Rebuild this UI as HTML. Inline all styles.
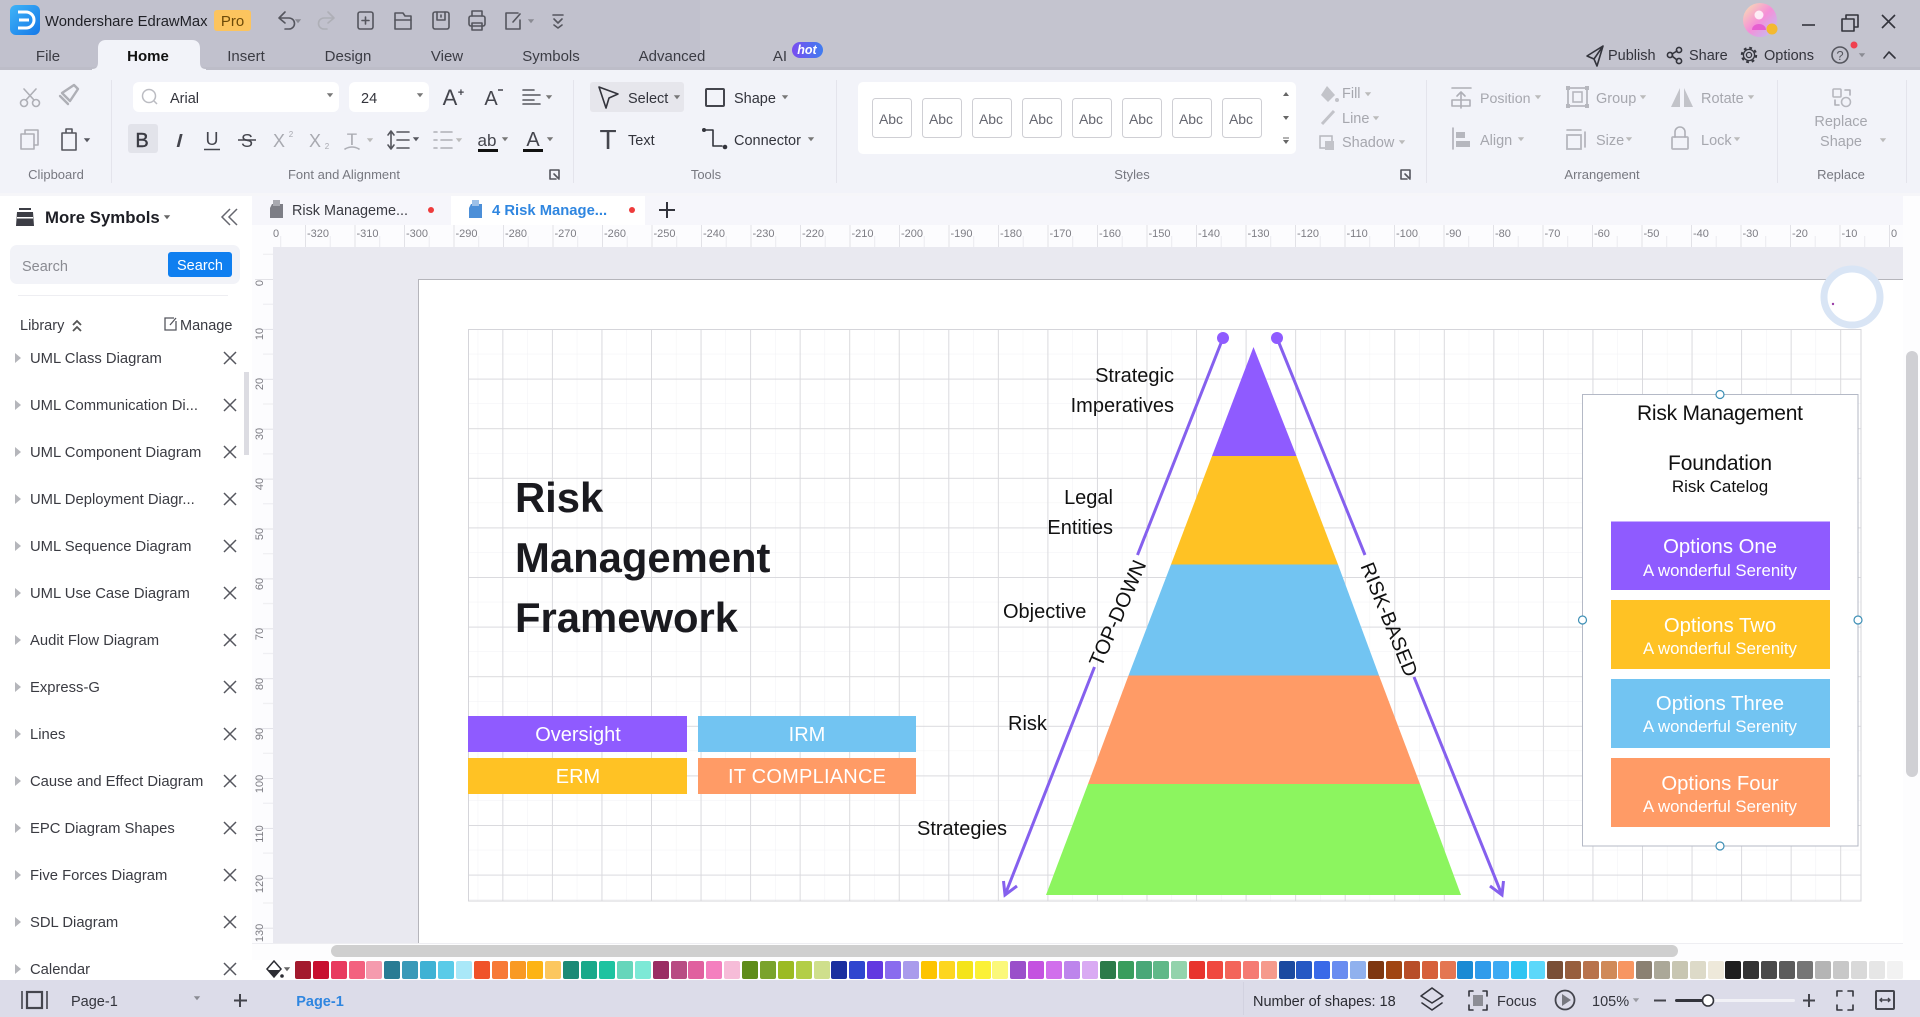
<!DOCTYPE html>
<html lang="en"><head><meta charset="utf-8"><title>Wondershare EdrawMax</title>
<style>
html,body{margin:0;padding:0;background:#fff;width:1920px;height:1017px;overflow:hidden}
svg{display:block}
text{font-family:"Liberation Sans",Arial,sans-serif}
.u{font-size:14.5px;fill:#33343c}
.g{font-size:14.5px;fill:#a6a7ae}
.l{font-size:13px;fill:#777880;text-anchor:middle}
.it{font-size:14.8px;fill:#3a3b42}
.r{font-size:11px;fill:#7d7d84}
.d{font-size:20px;fill:#111}
.w{fill:#fff;text-anchor:middle}
.s{fill:none;stroke:#55565e;stroke-width:1.6;stroke-linecap:round;stroke-linejoin:round}
.sd{fill:none;stroke:#aeafb6;stroke-width:1.6;stroke-linecap:round;stroke-linejoin:round}
.k{fill:none;stroke:#33343c;stroke-width:1.6;stroke-linecap:round;stroke-linejoin:round}
</style></head><body>
<svg width="1920" height="1017" viewBox="0 0 1920 1017" xmlns="http://www.w3.org/2000/svg">
<defs>
<path id="c" d="M-3.2-1.8h6.4L0 2.2z"/>
<path id="x" d="M-6-6L6 6M6-6L-6 6" fill="none" stroke="#55565e" stroke-width="1.5"/>
<path id="t" d="M-3-5L3 0L-3 5z" fill="#b5b6bb"/>
<linearGradient id="lg" x1="0" y1="0" x2="1" y2="1"><stop offset="0" stop-color="#3fb4f7"/><stop offset="1" stop-color="#1478e8"/></linearGradient>
<linearGradient id="hot" x1="0" y1="0" x2="1" y2="0"><stop offset="0" stop-color="#7a4df0"/><stop offset="1" stop-color="#3f7df0"/></linearGradient>
<linearGradient id="av" x1="0" y1="0" x2="1" y2="1"><stop offset="0" stop-color="#f8e6b0"/><stop offset=".5" stop-color="#f58fd8"/><stop offset="1" stop-color="#b8c6f6"/></linearGradient>
<pattern id="minor" x="477.7" y="304.2" width="49.55" height="49.6" patternUnits="userSpaceOnUse"><path d="M0 0V49.6M0 0H49.55" stroke="#f1f1f4" stroke-width="1" fill="none"/></pattern>
<pattern id="major" x="452.8" y="329" width="49.55" height="49.6" patternUnits="userSpaceOnUse"><path d="M.5 0V49.6M0 .5H49.55" stroke="#dadade" stroke-width="1" fill="none"/></pattern>
<pattern id="hr" x="305" y="225" width="49.5" height="22" patternUnits="userSpaceOnUse"><path d="M.5 0V22" stroke="#e2e2e7"/><path d="M25.2 11V22" stroke="#ebebef"/></pattern>
<pattern id="vr" x="252" y="279" width="21" height="49.9" patternUnits="userSpaceOnUse"><path d="M3 .5H21" stroke="#e2e2e7"/><path d="M11 25.2H21" stroke="#ebebef"/></pattern>
</defs>

<!-- backgrounds -->
<rect width="1920" height="1017" fill="#fff"/>
<rect width="1920" height="70" fill="#c4c4cf"/>
<rect width="700" height="70" fill="#bfbfcc" opacity=".6"/>
<rect y="67" width="1920" height="3" fill="#bdbdc8"/>
<rect y="70" width="1920" height="123" fill="#f2f3f9"/>
<rect y="193" width="1920" height="3" fill="#f6f6f9"/>
<path d="M92 69C97 69 98 66 98 62V48C98 43 101 40 106 40H192C197 40 200 43 200 48V62C200 66 201 69 206 69V72H92z" fill="#f2f3f9"/>

<!-- title bar -->
<rect x="10" y="5" width="30" height="30" rx="6" fill="url(#lg)"/>
<path d="M18 12H26A8 8 0 0 1 26 28H18M19 20H29" fill="none" stroke="#fff" stroke-width="3"/>
<text x="45" y="26" font-size="14.800" fill="#1f2026">Wondershare EdrawMax</text>
<rect x="214" y="10" width="37" height="21" rx="3" fill="#fcc45e"/>
<text x="232.500" y="26" font-size="15" fill="#6d4a08" text-anchor="middle">Pro</text>
<path class="s" d="M287 14L281 20L287 25M281 20H291A5.500 5.500 0 0 1 291 31H287" transform="translate(-2 -2)"/>
<use href="#c" x="298" y="21" fill="#8a8b93"/>
<path class="sd" d="M334 14L340 20L334 25M340 20H330A5.500 5.500 0 0 0 330 31H333" transform="translate(-6 -2)"/>
<rect class="s" x="358" y="12" width="15" height="17" rx="2"/><path class="s" d="M365.500 17V24M362 20.500H369"/>
<path class="s" d="M395 16V29H411V16H405L403 13H395z"/><path class="s" d="M395 20H411"/>
<rect class="s" x="433" y="12" width="16" height="17" rx="2"/><path class="s" d="M437 12V20H445V12M441 15V17"/>
<rect class="s" x="469" y="16" width="16" height="10" rx="2"/><path class="s" d="M472 16V11H482V16M472 23H482V30H472z"/>
<path class="s" d="M506 13H518M506 13V29H520V20M513 22L520 14"/>
<use href="#c" x="531" y="21" fill="#8a8b93"/>
<path class="s" d="M553 15H563M554 19L558 23L562 19M554 25L558 28L562 25"/>

<!-- tab labels -->
<g font-size="15" fill="#3b3c44" text-anchor="middle">
<text x="48" y="61">File</text>
<text x="148" y="61" font-weight="bold" fill="#111">Home</text>
<text x="246" y="61">Insert</text>
<text x="348" y="61">Design</text>
<text x="447" y="61">View</text>
<text x="551" y="61">Symbols</text>
<text x="672" y="61">Advanced</text>
<text x="780" y="61">AI</text>
</g>
<rect x="792" y="42" width="31" height="16" rx="8" fill="url(#hot)"/>
<text x="807" y="54" font-size="12.500" font-style="italic" font-weight="bold" fill="#fff" text-anchor="middle">hot</text>

<!-- top right -->
<circle cx="1760" cy="20" r="17" fill="url(#av)"/>
<circle cx="1759" cy="15" r="4.500" fill="#fff" opacity=".8"/><path d="M1752 30C1752 22 1766 22 1766 30z" fill="#e65fd0"/>
<circle cx="1772" cy="29" r="5.500" fill="#f4b92f"/>
<path d="M1802 25H1815" stroke="#33343c" stroke-width="1.6"/>
<path class="k" d="M1842 19H1854V31H1842zM1846 19V15H1858V27H1854" stroke-width="1.400"/>
<path d="M1882 15L1895 28M1895 15L1882 28" stroke="#33343c" stroke-width="1.6" fill="none"/>
<path class="k" d="M1603 46L1587 56L1594 59L1597 66L1603 46L1594 59" stroke-width="1.400"/>
<text x="1608" y="60" class="u" fill="#33343c">Publish</text>
<circle class="k" cx="1670" cy="55" r="2.600"/><circle class="k" cx="1679" cy="50" r="2.600"/><circle class="k" cx="1679" cy="61" r="2.600"/><path class="k" d="M1672 54L1677 51M1672 56L1677 60" stroke-width="1.200"/>
<text x="1689" y="60" class="u">Share</text>
<circle cx="1749" cy="55" r="2.600" fill="none" stroke="#33343c" stroke-width="1.300"/><circle cx="1749" cy="55" r="5.600" fill="none" stroke="#33343c" stroke-width="1.300"/><circle cx="1749" cy="55" r="7.200" fill="none" stroke="#33343c" stroke-width="2" stroke-dasharray="2.800 2.860"/>
<text x="1764" y="60" class="u">Options</text>
<circle class="s" cx="1840" cy="55" r="8"/><text x="1840" y="60" font-size="13" fill="#55565e" text-anchor="middle">?</text>
<circle cx="1854" cy="45" r="3.500" fill="#f0414f"/>
<use href="#c" x="1862" y="55" fill="#8a8b93"/>
<path class="k" d="M1884 58L1889 52L1895 58"/>

<!-- ribbon dividers -->
<g stroke="#e4e4ec"><path d="M111.500 80V183M573.500 80V183M836.500 80V183M1426.500 80V183M1777.500 80V183M1906.500 80V183"/></g>

<!-- clipboard -->
<g class="sd">
<circle cx="24" cy="103" r="3.500"/><circle cx="36" cy="103" r="3.500"/><path d="M26 100L36 89M34 100L24 89"/>
<path d="M62 93L70 101L78 89L74 85zM60 96L68 104" stroke-width="2.400"/>
<rect x="21" y="134" width="13" height="15"/><path d="M25 134V130H38V145H34"/>
</g>
<path class="s" d="M62 133H76V150H62zM66 133V129H72V133" stroke-width="2"/>
<use href="#c" x="87" y="140" fill="#55565e"/>
<text x="56" y="179" class="l">Clipboard</text>

<!-- font -->
<rect x="133" y="82" width="206" height="30" rx="6" fill="#fff"/>
<circle cx="149" cy="96" r="6.500" fill="none" stroke="#bbbcc2" stroke-width="1.500"/><path d="M154 101L157 104" stroke="#bbbcc2" stroke-width="1.500"/>
<text x="170" y="103" font-size="14.500" fill="#33343c">Arial</text>
<use href="#c" x="330" y="95" fill="#777"/>
<rect x="349" y="82" width="80" height="30" rx="6" fill="#fff"/>
<text x="361" y="103" font-size="14.500" fill="#33343c">24</text>
<use href="#c" x="420" y="95" fill="#777"/>
<text x="450" y="105" font-size="22" fill="#44454d" text-anchor="middle">A</text><text x="461" y="96" font-size="11" font-weight="bold" fill="#44454d" text-anchor="middle">+</text>
<text x="491" y="105" font-size="20" fill="#44454d" text-anchor="middle">A</text><path d="M498 90H503" stroke="#44454d" stroke-width="1.500"/>
<path class="s" d="M523 90H534M523 95H540M523 100H534M523 104H540" stroke-width="1.700"/>
<use href="#c" x="549" y="97" fill="#777"/>
<rect x="128" y="124" width="30" height="29" rx="3" fill="#e2e3ea"/>
<text x="142" y="147" font-size="20" fill="#3a3b43" stroke="#3a3b43" stroke-width=".4" text-anchor="middle">B</text>
<text transform="translate(178 147) skewX(-14)" font-size="19" font-weight="bold" fill="#44454d" text-anchor="middle">I</text>
<text x="212" y="145" font-size="18" fill="#44454d" text-anchor="middle">U</text><path d="M204 149.500H220" stroke="#44454d" stroke-width="1.500"/>
<text x="247" y="147" font-size="18" fill="#44454d" text-anchor="middle">S</text><path d="M238 140H256" stroke="#44454d" stroke-width="1.500"/>
<text x="279" y="147" font-size="18" fill="#a8a9b0" text-anchor="middle">X</text><text x="291" y="137" font-size="8" fill="#a8a9b0" text-anchor="middle">2</text>
<text x="315" y="147" font-size="18" fill="#a8a9b0" text-anchor="middle">X</text><text x="327" y="149" font-size="8" fill="#a8a9b0" text-anchor="middle">2</text>
<text x="352" y="145" font-size="17" font-family="Liberation Serif" fill="#a8a9b0" text-anchor="middle">T</text><path class="sd" d="M345 149Q352 145 359 149"/>
<use href="#c" x="370" y="140" fill="#bbb"/>
<path class="s" d="M391 132V148M388 135L391 131L394 135M388 145L391 149L394 145M397 132H409M397 140H409M397 148H409" stroke-width="1.800"/>
<use href="#c" x="416" y="139" fill="#55565e"/>
<path class="sd" d="M434 132H437M441 132H452M434 140H437M441 140H452M434 148H437M441 148H452" stroke-width="1.800"/>
<use href="#c" x="459" y="140" fill="#bbb"/>
<text x="487" y="146" font-size="17" fill="#44454d" text-anchor="middle">ab</text><rect x="478" y="149" width="20" height="3" fill="#111"/>
<use href="#c" x="505" y="139" fill="#777"/>
<text x="533" y="146" font-size="20" fill="#44454d" text-anchor="middle">A</text><rect x="523" y="149" width="20" height="3" fill="#111"/>
<use href="#c" x="550" y="139" fill="#777"/>
<text x="344" y="179" class="l">Font and Alignment</text>
<path class="s" d="M550 170H559V178M550 170V179H556M554 174L559 179" stroke-width="1.300"/>

<!-- tools -->
<rect x="590" y="82" width="94" height="30" rx="3" fill="#e6e6ec"/>
<path class="k" d="M599 87L618 94L609 98L606 108z" stroke-width="1.800"/>
<text x="628" y="103" class="u">Select</text><use href="#c" x="677" y="97" fill="#777"/>
<rect x="706" y="89" width="18" height="17" rx="1" fill="none" stroke="#44454d" stroke-width="2"/>
<text x="734" y="103" class="u">Shape</text><use href="#c" x="785" y="97" fill="#777"/>
<text x="608" y="149" font-size="28" font-family="Liberation Serif" fill="#44454d" text-anchor="middle">T</text>
<text x="628" y="145" class="u">Text</text>
<circle cx="704" cy="130" r="2" fill="#33343c"/><circle cx="725" cy="147" r="2.300" fill="#33343c"/>
<path class="k" d="M706 130H713V146H722"/>
<text x="734" y="145" class="u">Connector</text><use href="#c" x="811" y="139" fill="#777"/>
<text x="706" y="179" class="l">Tools</text>

<!-- styles -->
<rect x="858" y="82" width="438" height="72" rx="5" fill="#fff"/>
<g fill="#fff" stroke="#cfcfd4"><rect x="872.500" y="98.500" width="39" height="39" rx="3"/><rect x="922.500" y="98.500" width="39" height="39" rx="3"/><rect x="972.500" y="98.500" width="39" height="39" rx="3"/><rect x="1022.500" y="98.500" width="39" height="39" rx="3"/><rect x="1072.500" y="98.500" width="39" height="39" rx="3"/><rect x="1122.500" y="98.500" width="39" height="39" rx="3"/><rect x="1172.500" y="98.500" width="39" height="39" rx="3"/><rect x="1222.500" y="98.500" width="39" height="39" rx="3"/></g>
<g font-size="14" fill="#666770" text-anchor="middle"><text x="891" y="124">Abc</text><text x="941" y="124">Abc</text><text x="991" y="124">Abc</text><text x="1041" y="124">Abc</text><text x="1091" y="124">Abc</text><text x="1141" y="124">Abc</text><text x="1191" y="124">Abc</text><text x="1241" y="124">Abc</text></g>
<path d="M1286 92L1283 96H1289z M1283 116H1289L1286 120z M1283 140H1289L1286 144z" fill="#666"/><path d="M1283 138H1289" stroke="#666"/>
<text x="1132" y="179" class="l">Styles</text>
<path class="s" d="M1401 170H1410V178M1401 170V179H1407M1405 174L1410 179" stroke-width="1.300"/>

<!-- fill/line/shadow -->
<path d="M1327 86L1335 95L1328 102L1321 95z" fill="#c2c3c9"/><circle cx="1337" cy="100" r="2" fill="#c2c3c9"/>
<path d="M1322 124L1334 111" stroke="#c2c3c9" stroke-width="3"/>
<rect x="1320" y="136" width="12" height="12" fill="none" stroke="#b6b7be" stroke-width="1.500"/><rect x="1325" y="141" width="9" height="9" fill="#c2c3c9"/>
<g class="g"><text x="1342" y="98">Fill</text><text x="1342" y="123">Line</text><text x="1342" y="147">Shadow</text></g>
<use href="#c" x="1368" y="94" fill="#bbb"/><use href="#c" x="1376" y="118" fill="#bbb"/><use href="#c" x="1402" y="142" fill="#bbb"/>

<!-- arrangement -->
<path class="sd" d="M1452 88H1471M1461 108V93M1457 96L1461 92L1465 96M1452 100V106H1470V100z" stroke-width="1.800"/>
<g class="g"><text x="1480" y="103" font-size="14.200" style="font-size:14.200px">Position</text><text x="1596" y="103">Group</text><text x="1701" y="103">Rotate</text><text x="1480" y="145">Align</text><text x="1596" y="145">Size</text><text x="1701" y="145">Lock</text></g>
<use href="#c" x="1538" y="97" fill="#bbb"/><use href="#c" x="1643" y="97" fill="#bbb"/><use href="#c" x="1751" y="97" fill="#bbb"/><use href="#c" x="1521" y="139" fill="#bbb"/><use href="#c" x="1629" y="139" fill="#bbb"/><use href="#c" x="1737" y="139" fill="#bbb"/>
<rect x="1568" y="88" width="19" height="18" rx="1" fill="none" stroke="#b6b7be" stroke-width="1.800"/><rect x="1573" y="92" width="9" height="10" fill="none" stroke="#b6b7be" stroke-width="1.600"/>
<g fill="#b6b7be"><rect x="1566" y="86" width="4" height="4"/><rect x="1585" y="86" width="4" height="4"/><rect x="1566" y="104" width="4" height="4"/><rect x="1585" y="104" width="4" height="4"/></g>
<path d="M1680 88V107H1671zM1684 88V107H1693z" fill="#c2c3c9"/>
<path class="sd" d="M1453 128V149" stroke-width="2"/><rect x="1456" y="132" width="9" height="6" fill="#b6b7be"/><rect x="1456" y="141" width="14" height="6" fill="#b6b7be"/>
<rect x="1567" y="135" width="14" height="14" fill="none" stroke="#b6b7be" stroke-width="1.800"/><path class="sd" d="M1567 130H1581M1585 132V147"/>
<rect x="1672" y="137" width="16" height="12" rx="1" fill="none" stroke="#b6b7be" stroke-width="1.800"/><path class="sd" d="M1675 137V132A5 5 0 0 1 1685 132V137" stroke-width="1.800"/>
<text x="1602" y="179" class="l">Arrangement</text>

<!-- replace -->
<rect x="1833" y="89" width="8" height="8" rx="1" fill="none" stroke="#b6b7be" stroke-width="1.600"/><circle cx="1846" cy="102" r="4.500" fill="none" stroke="#b6b7be" stroke-width="1.600"/><path class="sd" d="M1845 90H1850V95M1835 100V105H1839" stroke-width="1.400"/>
<g class="g" text-anchor="middle"><text x="1841" y="126">Replace</text><text x="1841" y="146">Shape</text></g>
<use href="#c" x="1883" y="140" fill="#bbb"/>
<text x="1841" y="179" class="l">Replace</text>

<!-- left panel -->
<rect x="0" y="196" width="252" height="784" fill="#fff"/>
<path d="M17 212H33L34 226H16z" fill="#3c3d45"/><rect x="19" y="208" width="12" height="2" fill="#3c3d45"/><rect x="17" y="217" width="16" height="1.500" fill="#fff"/>
<text x="45" y="223" font-size="16.800" font-weight="bold" fill="#1d1e25">More Symbols</text>
<use href="#c" x="167" y="217" fill="#666"/>
<path d="M230 209L222 217L230 225M237 209L229 217L237 225" fill="none" stroke="#66676f" stroke-width="1.500"/>
<rect x="10" y="245" width="230" height="39" rx="7" fill="#f2f3f8"/>
<text x="22" y="271" font-size="14.500" fill="#8a8b92">Search</text>
<rect x="168" y="252" width="64" height="25" rx="3" fill="#0f7ff0"/>
<text x="200" y="270" font-size="14.500" fill="#fff" text-anchor="middle">Search</text>
<path d="M18 295.500H228" stroke="#eeeef2"/>
<text x="20" y="330" font-size="14.500" fill="#3a3b42">Library</text>
<path d="M73 325L77 321L81 325M73 331L77 327L81 331" fill="none" stroke="#555" stroke-width="1.800"/>
<path d="M174 318H165V330H176V321M170 325L176 318" fill="none" stroke="#55565e" stroke-width="1.300"/>
<text x="180" y="330" font-size="14.500" fill="#3a3b42">Manage</text>
<g class="it">
<text x="30" y="363">UML Class Diagram</text><text x="30" y="410">UML Communication Di...</text><text x="30" y="457">UML Component Diagram</text><text x="30" y="504">UML Deployment Diagr...</text><text x="30" y="551">UML Sequence Diagram</text><text x="30" y="598">UML Use Case Diagram</text><text x="30" y="645">Audit Flow Diagram</text><text x="30" y="692">Express-G</text><text x="30" y="739">Lines</text><text x="30" y="786">Cause and Effect Diagram</text><text x="30" y="833">EPC Diagram Shapes</text><text x="30" y="880">Five Forces Diagram</text><text x="30" y="927">SDL Diagram</text><text x="30" y="974">Calendar</text>
</g>
<use href="#t" x="18" y="358"/><use href="#t" x="18" y="405"/><use href="#t" x="18" y="452"/><use href="#t" x="18" y="499"/><use href="#t" x="18" y="546"/><use href="#t" x="18" y="593"/><use href="#t" x="18" y="640"/><use href="#t" x="18" y="687"/><use href="#t" x="18" y="734"/><use href="#t" x="18" y="781"/><use href="#t" x="18" y="828"/><use href="#t" x="18" y="875"/><use href="#t" x="18" y="922"/><use href="#t" x="18" y="969"/>
<use href="#x" x="230" y="358"/><use href="#x" x="230" y="405"/><use href="#x" x="230" y="452"/><use href="#x" x="230" y="499"/><use href="#x" x="230" y="546"/><use href="#x" x="230" y="593"/><use href="#x" x="230" y="640"/><use href="#x" x="230" y="687"/><use href="#x" x="230" y="734"/><use href="#x" x="230" y="781"/><use href="#x" x="230" y="828"/><use href="#x" x="230" y="875"/><use href="#x" x="230" y="922"/><use href="#x" x="230" y="969"/>
<rect x="244" y="372" width="5" height="83" fill="#dcdce2"/>

<!-- doc tabs -->
<rect x="252" y="196" width="1668" height="29" fill="#f6f6fb"/>
<rect x="451" y="196" width="194" height="29" fill="#fff"/>
<path d="M272 204H283V218H270V208z" fill="#7d7e86"/><rect x="273" y="200" width="7" height="6" fill="#a8a9b0"/>
<text x="292" y="215" font-size="14.400" fill="#3a3b42">Risk Manageme...</text>
<circle cx="431" cy="210" r="3" fill="#ee3b3b"/>
<path d="M471 204H482V218H469V208z" fill="#4c8fd8"/><rect x="472" y="200" width="7" height="6" fill="#9cc0e8"/>
<text x="492" y="215" font-size="14.800" font-weight="bold" fill="#2f86e0">4 Risk Manage...</text>
<circle cx="632" cy="210" r="3" fill="#ee3b3b"/>
<path d="M667 202V218M659 210H675" stroke="#33343c" stroke-width="2"/>

<!-- rulers -->
<rect x="252" y="225" width="1668" height="22" fill="#fcfcfe"/>
<rect x="252" y="247" width="21" height="696" fill="#fcfcfe"/>
<rect x="273" y="225" width="1630" height="22" fill="url(#hr)"/>
<rect x="252" y="247" width="21" height="696" fill="url(#vr)"/>
<g class="r">
<text x="273" y="237">0</text><text x="307" y="237">-320</text><text x="356.500" y="237">-310</text><text x="406" y="237">-300</text><text x="455.500" y="237">-290</text><text x="505" y="237">-280</text><text x="554.500" y="237">-270</text><text x="604" y="237">-260</text><text x="653.500" y="237">-250</text><text x="703" y="237">-240</text><text x="752.500" y="237">-230</text><text x="802" y="237">-220</text><text x="851.500" y="237">-210</text><text x="901" y="237">-200</text><text x="950.500" y="237">-190</text><text x="1000" y="237">-180</text><text x="1049.500" y="237">-170</text><text x="1099" y="237">-160</text><text x="1148.500" y="237">-150</text><text x="1198" y="237">-140</text><text x="1247.500" y="237">-130</text><text x="1297" y="237">-120</text><text x="1346.500" y="237">-110</text><text x="1396" y="237">-100</text><text x="1445.500" y="237">-90</text><text x="1495" y="237">-80</text><text x="1544.500" y="237">-70</text><text x="1594" y="237">-60</text><text x="1643.500" y="237">-50</text><text x="1693" y="237">-40</text><text x="1742.500" y="237">-30</text><text x="1792" y="237">-20</text><text x="1841.500" y="237">-10</text><text x="1891" y="237">0</text>
</g>
<g class="r" text-anchor="middle">
<text transform="translate(263 283) rotate(-90)">0</text><text transform="translate(263 334) rotate(-90)">10</text><text transform="translate(263 384) rotate(-90)">20</text><text transform="translate(263 434) rotate(-90)">30</text><text transform="translate(263 484) rotate(-90)">40</text><text transform="translate(263 534) rotate(-90)">50</text><text transform="translate(263 584) rotate(-90)">60</text><text transform="translate(263 634) rotate(-90)">70</text><text transform="translate(263 684) rotate(-90)">80</text><text transform="translate(263 734) rotate(-90)">90</text><text transform="translate(263 784) rotate(-90)">100</text><text transform="translate(263 834) rotate(-90)">110</text><text transform="translate(263 884) rotate(-90)">120</text><text transform="translate(263 933) rotate(-90)">130</text>
</g>

<!-- canvas -->
<rect x="273" y="247" width="1630" height="696" fill="#e9e9f0"/>
<rect x="418" y="279" width="1485" height="664" fill="#fff"/>
<path d="M418.500 943V279.500H1903" fill="none" stroke="#b5b5bb"/>
<rect x="468" y="329" width="1393" height="572" fill="url(#minor)"/>
<rect x="468" y="329" width="1393" height="572" fill="url(#major)"/>
<rect x="468.500" y="329.500" width="1392.500" height="571.500" fill="none" stroke="#d5d5da"/>

<!-- title -->
<g font-size="41.800" font-weight="bold" fill="#1a1a1f"><text x="515" y="512">Risk</text><text x="515" y="572">Management</text><text x="515" y="632">Framework</text></g>

<!-- boxes -->
<rect x="468" y="716" width="219" height="36" fill="#8f5bff"/>
<rect x="698" y="716" width="218" height="36" fill="#72c4f2"/>
<rect x="468" y="758" width="219" height="36" fill="#ffc224"/>
<rect x="698" y="758" width="218" height="36" fill="#ff9b66"/>
<g class="w" font-size="20"><text x="578" y="741">Oversight</text><text x="807" y="741">IRM</text><text x="578" y="783">ERM</text><text x="807" y="783" textLength="158">IT COMPLIANCE</text></g>

<!-- pyramid -->
<path d="M1253.500 347L1296.500 456H1212z" fill="#8f5bff"/>
<path d="M1212 456H1296.500L1338 564.500H1171z" fill="#ffc224"/>
<path d="M1171 564.500H1338L1379 675.500H1128.500z" fill="#72c4f2"/>
<path d="M1128.500 675.500H1379L1420 784H1088z" fill="#ff9b66"/>
<path d="M1088 784H1420L1461 895H1046z" fill="#8cf55f"/>

<!-- arrows -->
<g fill="none" stroke="#8560ee" stroke-width="3">
<path d="M1223 338L1137.500 555M1094.500 667L1005 895M1003.500 881L1005 895L1017 886"/>
<path d="M1277 338L1365 555M1414 677L1502 895M1490 886L1502 895L1503.500 881"/>
</g>
<circle cx="1223" cy="338" r="6" fill="#8f5bff"/><circle cx="1277" cy="338" r="6" fill="#8f5bff"/>
<text transform="translate(1124 616) rotate(-66.500)" font-size="20.500" fill="#111" text-anchor="middle">TOP-DOWN</text>
<text transform="translate(1383 622) rotate(68)" font-size="20" fill="#111" text-anchor="middle">RISK-BASED</text>

<!-- labels -->
<g class="d"><text x="1174" y="382" text-anchor="end">Strategic</text><text x="1174" y="412" text-anchor="end">Imperatives</text><text x="1113" y="504" text-anchor="end">Legal</text><text x="1113" y="534" text-anchor="end">Entities</text><text x="1003" y="618">Objective</text><text x="1008" y="730">Risk</text><text x="917" y="835">Strategies</text></g>

<!-- right panel -->
<rect x="1582.500" y="394.500" width="275.500" height="451.500" fill="#fff" stroke="#b4b9c6"/>
<text x="1720" y="420" font-size="21" fill="#111" text-anchor="middle" textLength="166">Risk Management</text>
<text x="1720" y="470" font-size="21" fill="#111" text-anchor="middle" textLength="104">Foundation</text>
<text x="1720" y="492" font-size="17" fill="#111" text-anchor="middle">Risk Catelog</text>
<rect x="1611" y="521.500" width="219" height="68.500" fill="#8f5bff"/>
<rect x="1611" y="600" width="219" height="69" fill="#ffc224"/>
<rect x="1611" y="679" width="219" height="69" fill="#72c4f2"/>
<rect x="1611" y="758" width="219" height="69" fill="#ff9b66"/>
<g class="w" font-size="20.300"><text x="1720" y="553">Options One</text><text x="1720" y="632">Options Two</text><text x="1720" y="710">Options Three</text><text x="1720" y="790">Options Four</text></g>
<g class="w" font-size="16.800"><text x="1720" y="576">A wonderful Serenity</text><text x="1720" y="654">A wonderful Serenity</text><text x="1720" y="732">A wonderful Serenity</text><text x="1720" y="812">A wonderful Serenity</text></g>
<g fill="#fff" stroke="#3d8fb5" stroke-width="1.200"><circle cx="1720" cy="394.500" r="4"/><circle cx="1582.500" cy="620" r="4"/><circle cx="1858" cy="620" r="4"/><circle cx="1720" cy="846" r="4"/></g>

<!-- ring -->
<circle cx="1852" cy="297" r="28" fill="#fff" stroke="#d9e5f5" stroke-width="7"/>
<circle cx="1833" cy="304" r="1.200" fill="#9a3fa8"/>

<!-- scrollbars -->
<rect x="1903" y="196" width="17" height="784" fill="#fdfdfe"/>
<rect x="1906" y="351" width="12" height="426" rx="6" fill="#d0d0d4"/>
<rect x="252" y="943" width="1651" height="18" fill="#fdfdfe"/>
<path d="M252 943.500H1903" stroke="#eeeef2"/>
<rect x="331" y="945" width="1347" height="12" rx="6" fill="#cfcfcf"/>

<!-- palette -->
<rect x="252" y="960" width="1668" height="20" fill="#fff"/>
<path d="M274 961L281 969L274 977L267 969z" fill="none" stroke="#2c2d33" stroke-width="1.500"/><path d="M268 970H280L274 976.500z" fill="#2c2d33"/><circle cx="282" cy="976" r="1.800" fill="#2c2d33"/>
<use href="#c" x="287" y="969" fill="#666"/>
<g>
<rect x="295" y="961" width="16" height="18" rx="2" fill="#a31a2e"/><rect x="313" y="961" width="16" height="18" rx="2" fill="#c8102f"/><rect x="331" y="961" width="16" height="18" rx="2" fill="#e83a5e"/><rect x="349" y="961" width="16" height="18" rx="2" fill="#f3617f"/><rect x="366" y="961" width="16" height="18" rx="2" fill="#f59bae"/>
<rect x="384" y="961" width="16" height="18" rx="2" fill="#2a7c94"/><rect x="402" y="961" width="16" height="18" rx="2" fill="#3a9ab8"/><rect x="420" y="961" width="16" height="18" rx="2" fill="#3fb2d4"/><rect x="438" y="961" width="16" height="18" rx="2" fill="#5acbe8"/><rect x="456" y="961" width="16" height="18" rx="2" fill="#a9e8f8"/>
<rect x="474" y="961" width="16" height="18" rx="2" fill="#f0532a"/><rect x="492" y="961" width="16" height="18" rx="2" fill="#f77a37"/><rect x="510" y="961" width="16" height="18" rx="2" fill="#f99a24"/><rect x="527" y="961" width="16" height="18" rx="2" fill="#fdb415"/><rect x="545" y="961" width="16" height="18" rx="2" fill="#fcc75f"/>
<rect x="563" y="961" width="16" height="18" rx="2" fill="#1b8a76"/><rect x="581" y="961" width="16" height="18" rx="2" fill="#1aa98a"/><rect x="599" y="961" width="16" height="18" rx="2" fill="#1dc3a0"/><rect x="617" y="961" width="16" height="18" rx="2" fill="#66d6bb"/><rect x="635" y="961" width="16" height="18" rx="2" fill="#7de9d6"/>
<rect x="653" y="961" width="16" height="18" rx="2" fill="#9a2d63"/><rect x="671" y="961" width="16" height="18" rx="2" fill="#b84c83"/><rect x="688" y="961" width="16" height="18" rx="2" fill="#e0609f"/><rect x="706" y="961" width="16" height="18" rx="2" fill="#f47fbf"/><rect x="724" y="961" width="16" height="18" rx="2" fill="#f6bcd8"/>
<rect x="742" y="961" width="16" height="18" rx="2" fill="#5f8d1a"/><rect x="760" y="961" width="16" height="18" rx="2" fill="#7aa32b"/><rect x="778" y="961" width="16" height="18" rx="2" fill="#9cbb22"/><rect x="796" y="961" width="16" height="18" rx="2" fill="#b3ce47"/><rect x="814" y="961" width="16" height="18" rx="2" fill="#cfdf8c"/>
<rect x="831" y="961" width="16" height="18" rx="2" fill="#1b2fa0"/><rect x="849" y="961" width="16" height="18" rx="2" fill="#2f45cf"/><rect x="867" y="961" width="16" height="18" rx="2" fill="#6238e0"/><rect x="885" y="961" width="16" height="18" rx="2" fill="#8a6cee"/><rect x="903" y="961" width="16" height="18" rx="2" fill="#a99bec"/>
<rect x="921" y="961" width="16" height="18" rx="2" fill="#fdc400"/><rect x="939" y="961" width="16" height="18" rx="2" fill="#fdd61f"/><rect x="957" y="961" width="16" height="18" rx="2" fill="#f4e41a"/><rect x="975" y="961" width="16" height="18" rx="2" fill="#fbf136"/><rect x="992" y="961" width="16" height="18" rx="2" fill="#fbf87a"/>
<rect x="1010" y="961" width="16" height="18" rx="2" fill="#9a4fca"/><rect x="1028" y="961" width="16" height="18" rx="2" fill="#c452e0"/><rect x="1046" y="961" width="16" height="18" rx="2" fill="#d16fec"/><rect x="1064" y="961" width="16" height="18" rx="2" fill="#bd85ec"/><rect x="1082" y="961" width="16" height="18" rx="2" fill="#d9a9f3"/>
<rect x="1100" y="961" width="16" height="18" rx="2" fill="#2b7b49"/><rect x="1118" y="961" width="16" height="18" rx="2" fill="#3a9d5d"/><rect x="1136" y="961" width="16" height="18" rx="2" fill="#4aa878"/><rect x="1153" y="961" width="16" height="18" rx="2" fill="#60b888"/><rect x="1171" y="961" width="16" height="18" rx="2" fill="#93d3ac"/>
<rect x="1189" y="961" width="16" height="18" rx="2" fill="#e8352e"/><rect x="1207" y="961" width="16" height="18" rx="2" fill="#f0483f"/><rect x="1225" y="961" width="16" height="18" rx="2" fill="#f3655a"/><rect x="1243" y="961" width="16" height="18" rx="2" fill="#f57b73"/><rect x="1261" y="961" width="16" height="18" rx="2" fill="#f69a8c"/>
<rect x="1279" y="961" width="16" height="18" rx="2" fill="#1b4aa0"/><rect x="1296" y="961" width="16" height="18" rx="2" fill="#2558c4"/><rect x="1314" y="961" width="16" height="18" rx="2" fill="#3a6ae8"/><rect x="1332" y="961" width="16" height="18" rx="2" fill="#6a8df0"/><rect x="1350" y="961" width="16" height="18" rx="2" fill="#90b1ee"/>
<rect x="1368" y="961" width="16" height="18" rx="2" fill="#7e3710"/><rect x="1386" y="961" width="16" height="18" rx="2" fill="#a04512"/><rect x="1404" y="961" width="16" height="18" rx="2" fill="#b84e28"/><rect x="1422" y="961" width="16" height="18" rx="2" fill="#d6603b"/><rect x="1440" y="961" width="16" height="18" rx="2" fill="#e47652"/>
<rect x="1457" y="961" width="16" height="18" rx="2" fill="#1a8ad4"/><rect x="1475" y="961" width="16" height="18" rx="2" fill="#2f9ceb"/><rect x="1493" y="961" width="16" height="18" rx="2" fill="#3eabf3"/><rect x="1511" y="961" width="16" height="18" rx="2" fill="#2ec5f2"/><rect x="1529" y="961" width="16" height="18" rx="2" fill="#5cd8fa"/>
<rect x="1547" y="961" width="16" height="18" rx="2" fill="#7a4f35"/><rect x="1565" y="961" width="16" height="18" rx="2" fill="#975f3d"/><rect x="1583" y="961" width="16" height="18" rx="2" fill="#b8734c"/><rect x="1601" y="961" width="16" height="18" rx="2" fill="#d08a58"/><rect x="1618" y="961" width="16" height="18" rx="2" fill="#f79661"/>
<rect x="1636" y="961" width="16" height="18" rx="2" fill="#8b8172"/><rect x="1654" y="961" width="16" height="18" rx="2" fill="#aba898"/><rect x="1672" y="961" width="16" height="18" rx="2" fill="#c8c6b2"/><rect x="1690" y="961" width="16" height="18" rx="2" fill="#dddac8"/><rect x="1708" y="961" width="16" height="18" rx="2" fill="#eee9da"/>
<rect x="1725" y="961" width="16" height="18" rx="2" fill="#1f1f1f"/><rect x="1743" y="961" width="16" height="18" rx="2" fill="#333"/><rect x="1761" y="961" width="16" height="18" rx="2" fill="#4a4a4a"/><rect x="1779" y="961" width="16" height="18" rx="2" fill="#5c5c5c"/><rect x="1797" y="961" width="16" height="18" rx="2" fill="#767676"/>
<rect x="1815" y="961" width="16" height="18" rx="2" fill="#b5b5b5"/><rect x="1833" y="961" width="16" height="18" rx="2" fill="#c8c8c8"/><rect x="1851" y="961" width="16" height="18" rx="2" fill="#d9d9d9"/><rect x="1869" y="961" width="16" height="18" rx="2" fill="#e6e6e6"/><rect x="1887" y="961" width="16" height="18" rx="2" fill="#f2f2f2"/>
</g>

<!-- status bar -->
<rect y="980" width="1920" height="37" fill="#dcdce9"/>
<path d="M22 991V1009M47 991V1009" stroke="#55565e" stroke-width="1.800"/><rect x="27" y="992" width="15" height="16" fill="none" stroke="#44454d" stroke-width="2.200"/>
<text x="71" y="1006" class="u">Page-1</text>
<use href="#c" x="197" y="998" fill="#8a8b93"/>
<path d="M240 994V1007M234 1000.500H247" stroke="#44454d" stroke-width="2"/>
<text x="320" y="1006" font-size="14.500" font-weight="bold" fill="#2f86e0" text-anchor="middle">Page-1</text>
<path d="M1243.500 982V1015" stroke="#d2d2e0"/>
<text x="1253" y="1006" font-size="14.500" fill="#2a2b32">Number of shapes: 18</text>
<path class="k" d="M1432 988L1443 996L1432 1003L1421 996zM1422 1003L1432 1010L1442 1003" stroke-width="2"/>
<path class="k" d="M1473 991H1469V996M1483 991H1487V996M1473 1010H1469V1005M1483 1010H1487V1005" stroke-width="2"/><rect x="1473" y="995" width="10" height="11" fill="#8c8d95"/>
<text x="1497" y="1006" class="u">Focus</text>
<circle cx="1565" cy="1000" r="9.500" fill="none" stroke="#44454d" stroke-width="1.800"/><path d="M1562 994L1571 1000L1562 1006z" fill="#77787f"/>
<text x="1592" y="1006" class="u">105%</text>
<use href="#c" x="1636" y="1000" fill="#9a9ba2"/>
<path d="M1654 1000.500H1666" stroke="#44454d" stroke-width="2"/>
<rect x="1675" y="999" width="120" height="3" rx="1.500" fill="#f1f1f6"/>
<rect x="1675" y="999" width="33" height="3" rx="1.500" fill="#33343c"/>
<circle cx="1708" cy="1000.500" r="5.500" fill="#fff" stroke="#33343c" stroke-width="1.600"/>
<path d="M1809 994V1007M1803 1000.500H1815" stroke="#44454d" stroke-width="2"/>
<path class="k" d="M1842 991H1837V996M1848 991H1853V996M1842 1010H1837V1005M1848 1010H1853V1005" stroke-width="2"/>
<rect x="1876" y="991" width="18" height="18" rx="1" fill="none" stroke="#44454d" stroke-width="2"/><path d="M1880 1000H1890M1882 998L1880 1000L1882 1002M1888 998L1890 1000L1888 1002" fill="none" stroke="#44454d" stroke-width="1.400"/>
</svg>
</body></html>
